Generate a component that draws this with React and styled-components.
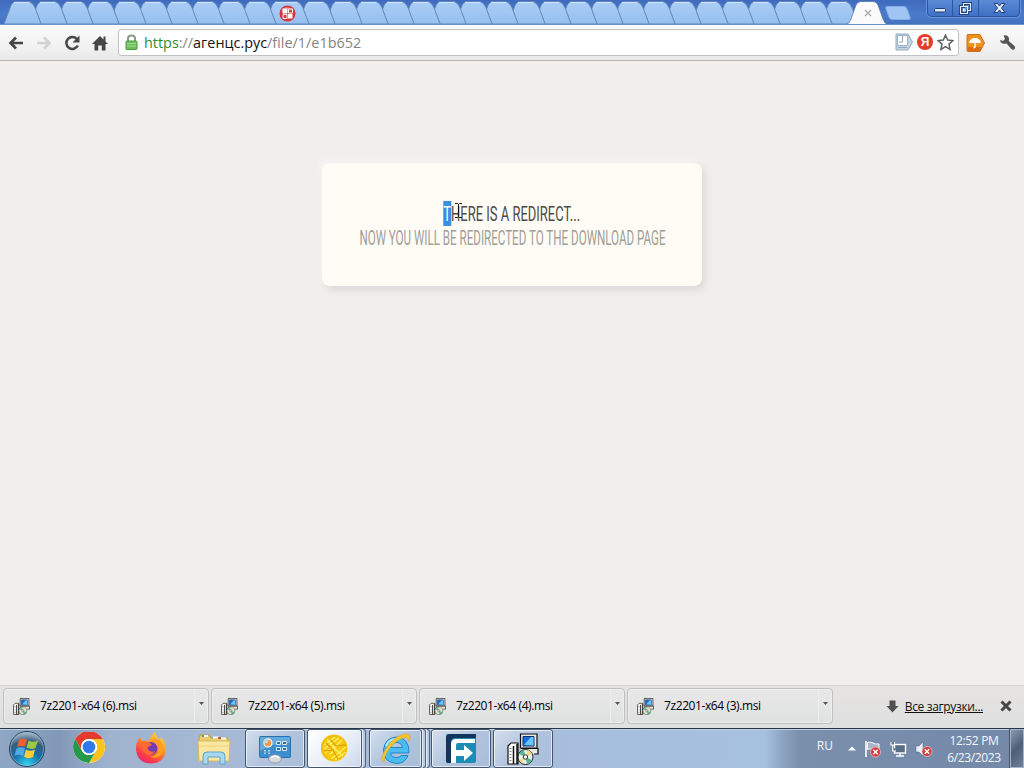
import React from 'react';
import styled, { createGlobalStyle } from 'styled-components';

const GlobalStyle = createGlobalStyle`
    * {
        box-sizing: border-box;
    }
    body {
        margin: 0;
        overflow: hidden;
        font-family: 'Open Sans', 'Noto Sans', sans-serif;
    }
    svg {
        display: block;
        flex: none;
    }
`;

const Screen = styled.div`
    display: flex;
    flex-direction: column;
    width: 1024px;
    height: 768px;
    background-color: #f1eeec;
`;

const TabStrip = styled.div`
    display: flex;
    height: 25px;
    padding-left: 9px;
    overflow: hidden;
    background: linear-gradient(#3f6abf, #4a7bcb 60%, #4472be);
    border-bottom: 1px solid #6f94cc;
`;

const TabCell = styled.div`
    position: relative;
    flex: none;
    width: ${props => props.$width}px;
    z-index: ${props => props.$level};

    svg {
        overflow: visible;
    }
`;

const Favicon = styled.div`
    position: absolute;
    left: 9px;
    top: 5px;
`;

const NewTab = styled.div`
    width: 22px;
    height: 14px;
    margin: 6px 0 0 8px;
    transform: skewX(20deg);
    border: 1px solid #83ade8;
    border-radius: 3px;
    background-color: #a0c4f3;
`;

const WindowButtons = styled.div`
    display: flex;
    height: 17px;
    margin-left: auto;
    margin-right: 4px;
    border: 1px solid #2c55a0;
    border-top: none;
    border-radius: 0 0 5px 5px;
    background: linear-gradient(#5c8ad6, #3f70c4);
    box-shadow: 0 0 0 1px #6692da;
`;

const WindowButton = styled.div`
    display: flex;
    align-items: center;
    justify-content: center;
    width: ${props => props.$width}px;
    padding-top: ${props => props.$drop || 0}px;
    border-right: ${props => props.$last ? 'none' : '1px solid #2c55a0'};
`;

const Toolbar = styled.div`
    display: flex;
    align-items: center;
    height: 36px;
    padding: 0 8px;
    background: linear-gradient(#fbfbfb, #f4f4f4 50%, #e8e8e8);
    border-bottom: 1px solid #b8b8b8;
`;

const NavButtons = styled.div`
    display: flex;
    gap: 12px;
    width: 110px;
`;

const AddressBar = styled.div`
    display: flex;
    align-items: center;
    width: 841px;
    height: 27px;
    margin-top: -1px;
    padding: 0 4px 0 6px;
    border: 1px solid #c2c2c2;
    border-radius: 3px;
    background-color: #fff;
`;

const Url = styled.div`
    flex: 1;
    margin: 1px 0 0 6px;
    color: #858585;
    font-size: 14.4px;
    line-height: 20px;
    white-space: pre;
`;

const Scheme = styled.span`
    color: #2c9030;
`;

const Host = styled.span`
    color: #111;
`;

const BarIcons = styled.div`
    display: flex;
    align-items: center;
    gap: 4px;
`;

const Extensions = styled.div`
    display: flex;
    align-items: center;
    gap: 14px;
    margin-left: 7px;
`;

const Page = styled.main`
    flex: 1;
    padding-top: 102px;
`;

const Card = styled.div`
    display: flex;
    flex-direction: column;
    align-items: center;
    width: 380px;
    height: 123px;
    margin: 0 auto;
    padding-top: 38px;
    border-radius: 8px;
    background-color: #fffcf6;
    box-shadow: 3px 4px 8px rgba(0, 0, 0, 0.09), -3px -3px 7px rgba(255, 255, 255, 0.45);
    font-family: Roboto, 'Open Sans', sans-serif;
    text-transform: uppercase;
    white-space: nowrap;
`;

const Heading = styled.div`
    color: #4d4b49;
    font-size: 21px;
    font-weight: 400;
    line-height: 26px;
    transform: scaleX(${props => props.$squeeze});
`;

const Message = styled.div`
    color: #a09e98;
    font-size: 20.5px;
    font-weight: 400;
    line-height: 24px;
    margin-top: -1px;
    transform: scaleX(${props => props.$squeeze});
`;

const Selected = styled.span`
    display: inline-block;
    height: 25px;
    background-color: #3b8fe0;
    color: #fff;
`;

const HeadingRow = styled.div`
    position: relative;
`;

const Cursor = styled.svg`
    position: absolute;
    left: calc(50% - 58px);
    top: 1px;
`;

const Shelf = styled.div`
    display: flex;
    align-items: center;
    gap: 2px;
    height: 43px;
    padding: 0 12px 2px 3px;
    border-top: 1px solid #d6d4d2;
    background: linear-gradient(#e6e4e3, #dedfdf);
`;

const Download = styled.div`
    display: flex;
    align-items: center;
    width: 206px;
    height: 36px;
    padding-left: 9px;
    border: 1px solid #c0c0c0;
    border-radius: 4px;
    background: linear-gradient(#e9e8e8, #dfe1e1);
    box-shadow: inset 0 0 0 1px #efeeee;
`;

const FileName = styled.div`
    flex: 1;
    margin: -1px 0 0 10px;
    color: #000;
    font-size: 12px;
    letter-spacing: -0.4px;
    white-space: nowrap;
`;

const Arrow = styled.div`
    width: 14px;
    height: 32px;
    padding: 12px 0 0 4px;
    border-left: 1px solid #eeeeee;
`;

const AllDownloads = styled.div`
    display: flex;
    align-items: center;
    gap: 6px;
    margin-left: auto;
    color: #111;
    font-size: 12px;
    letter-spacing: -0.35px;
    white-space: nowrap;

    u {
        margin-right: 11px;
    }
`;

const TaskbarRow = styled.div`
    display: flex;
    height: 40px;
    border-top: 1px solid #26364a;
    box-shadow: inset 0 1px 0 #c3d0e2;
    background: linear-gradient(90deg, #8fa6c5 0, #8298b7 60px, #9fb3cf 110px, #a6bad6 240px, #a6bedb 560px, #a6c0df 765px, #8ca4c3 782px, #7a8fac 800px, #7489a8 1024px);
`;

const Pinned = styled.div`
    display: flex;
    align-items: center;
    gap: 30px;
    width: 236px;
    margin-right: 9px;
    padding-left: 8px;

    svg:nth-child(2) {
        margin-left: -3px;
    }
`;

const TaskButton = styled.div`
    display: flex;
    align-items: center;
    justify-content: center;
    width: ${props => props.$width}px;
    height: 39px;
    margin-right: ${props => props.$gap}px;
    border: 1px solid #45556d;
    border-radius: 3px;
    background: ${props => props.$active
        ? 'linear-gradient(135deg, #ffffff, #e6edf7 60%, #c9d7ea)'
        : 'linear-gradient(135deg, #d5dfed, #b1c3dd 50%, #a9bedb)'};
    box-shadow: inset 0 0 0 1px rgba(255, 255, 255, 0.65);
`;

// edge of the windows grouped behind a task button
const StackEdge = styled.div`
    width: 4px;
    height: 39px;
    margin-right: ${props => props.$gap || 0}px;
    border: 1px solid #53647c;
    border-left: 1px solid #e4ecf6;
    border-radius: 0 3px 3px 0;
    background-color: #b9cae1;
`;

const Tray = styled.div`
    display: flex;
    align-items: center;
    margin-left: auto;
    color: #f3f7fc;
`;

const Language = styled.div`
    margin: -6px 15px 0 0;
    font-size: 12px;
`;

const TrayIcons = styled.div`
    display: flex;
    align-items: center;
    gap: 8px;
    margin-right: 13px;
`;

const Clock = styled.div`
    width: 56px;
    margin-right: 8px;
    font-size: 12px;
    line-height: 17px;
    text-align: center;
    letter-spacing: -0.35px;
    white-space: nowrap;
`;

const ShowDesktop = styled.div`
    width: 14px;
    height: 39px;
    border: 1px solid #a3b4ca;
    background: linear-gradient(135deg, #8a9aae, #4d5f78 50%, #6f8198);
    box-shadow: -1px 0 0 #44546b;
`;

const Tab = ({ width = 26.15, level, children }) => (
    <TabCell $width={width} $level={level}>
        <svg width={width} height="24">
            <path
                d={`M-5 24 L1 8 Q3 1.5 7 1.5 H${width - 7} Q${width - 3} 1.5 ${width} 8 L${width + 6} 24 Z`}
                fill="url(#tabFill)"
                stroke="#6286bb"
            />
            <path d={`M5 2.5 H${width - 6}`} stroke="#cfe2fb" />
        </svg>
        {children}
    </TabCell>
);

const TabDefs = () => (
    <svg width="0" height="0">
        <defs>
            <linearGradient id="tabFill" x1="0" y1="0" x2="0" y2="1">
                <stop offset="0" stopColor="#a9cdf6" />
                <stop offset="1" stopColor="#97c0ee" />
            </linearGradient>
        </defs>
    </svg>
);

const Tabs = () => {
    const tabs = [];
    for (let i = 0; i < 32; i++) {
        tabs.push(
            <Tab key={i} level={40 - i} width={i === 10 ? 33 : 26.15}>
                {i === 10 && (
                    <Favicon>
                        <svg width="17" height="17" viewBox="0 0 17 17">
                            <circle cx="8.500" cy="8.500" r="8" fill="#d8323a" />
                            <path d="M2 6 Q8 -2 15 6 Q8 4 2 6" fill="#ea7378" />
                            <path d="M3.500 3.500 h5 v5 h-5z M9 9 h4.500 v4.500 h-4.500z" fill="#fff" />
                            <path d="M9.500 4 h4 v4 h-4z M4 9.500 h4 v4 h-4z" fill="none" stroke="#fff" />
                        </svg>
                    </Favicon>
                )}
            </Tab>
        );
    }
    return tabs;
};

const ActiveTab = () => (
    <TabCell $width={27} $level={50}>
        <svg width="27" height="25">
            <path d="M-6 25 Q-3 24 -1 19 L4 5 Q5.500 1.500 9 1.500 H21 Q24.500 1.500 26 5 L31 19 Q33 24 36 25 Z" fill="#fbfbfb" stroke="#5378ae" strokeWidth="0.800" />
            <path d="M13 10 l6 6 M19 10 l-6 6" stroke="#a8a8a8" strokeWidth="1.300" />
        </svg>
    </TabCell>
);

const InstallerIcon = ({ size }) => (
    <svg width={size} height={size} viewBox="0 0 32 32">
        <path d="M1 13 L4 10 H11 V31 H1 Z" fill="#fff" stroke="#111" strokeWidth="1.200" />
        <path d="M6.500 13 V31 M10 11 V31" stroke="#111" strokeWidth="1.500" />
        <path d="M3.500 15 V30" stroke="#888" strokeDasharray="1 2" strokeWidth="2" />
        <path d="M13.500 1 H30 V15 H13.500 Z" fill="#e8e8e8" stroke="#111" strokeWidth="1.200" />
        <path d="M16 3.500 H27 V13 H16 Z" fill="#1370e0" stroke="#0c2c64" />
        <path d="M17 12 L24 4 H26.500 V12.500 Z" fill="#6cc5ff" />
        <path d="M14 15.500 H31 V21 H27" fill="#e8e8e8" stroke="#111" strokeWidth="1.200" />
        <circle cx="18.500" cy="24" r="7.500" fill="#e8f2ea" stroke="#222" />
        <path d="M18.500 24 L12 21 A7 7 0 0 1 17 17Z M18.500 24 L25 27 A7 7 0 0 1 20 31Z" fill="#57b590" />
        <path d="M18.500 24 L21 17 A7 7 0 0 1 25 21Z M18.500 24 L15 30 L12 27Z" fill="#ecd98c" />
        <circle cx="18.500" cy="24" r="2.200" fill="#fff" stroke="#333" />
    </svg>
);

const StartIcon = () => (
    <svg width="38" height="38" viewBox="0 0 38 38">
        <defs>
            <radialGradient id="orb" cx="0.5" cy="0.95" r="0.9">
                <stop offset="0" stopColor="#34d5f3" />
                <stop offset="0.450" stopColor="#1670a9" />
                <stop offset="0.750" stopColor="#365d7e" />
                <stop offset="1" stopColor="#9fb3c5" />
            </radialGradient>
        </defs>
        <circle cx="19" cy="19" r="17.500" fill="url(#orb)" stroke="#27435f" />
        <circle cx="19" cy="19" r="16.500" fill="none" stroke="#9bbcd0" strokeOpacity="0.600" />
        <path d="M11 10 Q15 7 19 10 L17 17 Q13 15 9 17 Z" fill="#ed622b" />
        <path d="M20.500 10.500 Q25 13 30 10.500 L27.500 18 Q23 20 18.500 17.500 Z" fill="#9dca3c" />
        <path d="M8.500 18.500 Q13 16 17 18.500 L15 26 Q11 23.500 6.500 26 Z" fill="#4eabe8" />
        <path d="M18 19.500 Q22 22 27 19.500 L25 27 Q20 29.500 16 26.500 Z" fill="#fbcd3b" />
    </svg>
);

const ChromeIcon = () => (
    <svg width="32" height="34" viewBox="0 1 32 34">
        <circle cx="16" cy="16" r="16" fill="#fff" />
        <path d="M2.150 8 A16 16 0 0 1 29.850 8 H16 A8 8 0 0 0 9.070 20 Z" fill="#e33b2e" />
        <path d="M29.850 8 A16 16 0 0 1 16 32 L22.930 20 A8 8 0 0 0 16 8 Z" fill="#fcc31e" />
        <path d="M16 32 A16 16 0 0 1 2.150 8 L9.070 20 A8 8 0 0 0 22.930 20 Z" fill="#25994b" />
        <circle cx="16" cy="16" r="8" fill="#fff" />
        <circle cx="16" cy="16" r="6.300" fill="#3278e6" />
    </svg>
);

const FirefoxIcon = () => (
    <svg width="32" height="34" viewBox="0 0 32 34">
        <defs>
            <linearGradient id="fox" x1="0.8" y1="0" x2="0.2" y2="1">
                <stop offset="0" stopColor="#ffdf3c" />
                <stop offset="0.400" stopColor="#ff9427" />
                <stop offset="0.750" stopColor="#fb3f46" />
                <stop offset="1" stopColor="#e52278" />
            </linearGradient>
        </defs>
        <path d="M1 17 Q1 10 5 5 Q6 8 8 9 Q12 8 14 9 Q16 3 20 0 Q21 5 25 8 Q26 6 26 5 Q31 10 31 17 Q30 31 16 31.500 Q2 31 1 17Z" fill="url(#fox)" />
        <circle cx="16" cy="16.500" r="6.500" fill="#7639b9" />
        <path d="M7 10 Q13 8 17 13 Q13 14 12.500 17 Q15 21 20 19 Q17 25 11 22 Q6 18 7 10Z" fill="#ff6a35" />
        <path d="M17 10 Q23 9 23.500 16 Q23 24 15 25 Q25 28 28 19 Q29 10 22 7 Q17 5 17 10Z" fill="#ff9d25" />
    </svg>
);

const ExplorerIcon = () => (
    <svg width="34" height="32" viewBox="0 0 34 32">
        <path d="M2 5 L3 2 H12 L14 5 H31 V27 H2 Z" fill="#e9cc6c" stroke="#c0a145" />
        <path d="M6 3 h5 M16 4.500 h6 M24 5.500 h5" stroke="#fff" strokeWidth="2" />
        <path d="M5 3 h2" stroke="#4aa650" strokeWidth="2" />
        <path d="M21 5 h3" stroke="#c55636" strokeWidth="2" />
        <path d="M1 8 H33 L32 28 H2 Z" fill="#fae7a0" stroke="#d7ba60" />
        <path d="M2 13 H32" stroke="#efd27b" />
        <path d="M6 31 V23 Q6 19 10 19 H24 Q28 19 28 23 V31 H23 V24 H11 V31 Z" fill="#a8d9f0" stroke="#5ea3cb" />
    </svg>
);

const ControlPanelIcon = () => (
    <svg width="32" height="30" viewBox="0 0 32 30">
        <rect x="0.5" y="2.5" width="31" height="21" rx="1" fill="#3d8ecf" stroke="#2970b0" />
        <path d="M1 3 H31 V9 Q16 8 1 17Z" fill="#62aadc" />
        <circle cx="9" cy="9" r="4" fill="#f29b46" stroke="#e4f1fa" strokeWidth="1.300" />
        <path d="M9 9 V4 A5 5 0 0 0 4 9Z" fill="#b6dbf2" />
        <path d="M17.500 7.500 h4 v3 h-4z M23.500 7.500 h4 v3 h-4z M17.500 13.500 h4 v3 h-4z M23.500 13.500 h4 v3 h-4z" fill="#2870b2" stroke="#d4eafa" />
        <path d="M6 16 v4 M10 16 v4" stroke="#a8d4f0" strokeDasharray="1.5 1" strokeWidth="2" />
        <ellipse cx="16" cy="25" rx="6.500" ry="4" fill="#d5d9dc" stroke="#949da5" />
        <path d="M12 24 Q16 20 20 24" stroke="#fff" fill="none" strokeWidth="1.500" />
    </svg>
);

const CoinIcon = () => (
    <svg width="28" height="30" viewBox="0 0 28 30">
        <circle cx="13" cy="14" r="13.500" fill="#f9c80f" />
        <circle cx="13" cy="14" r="12" fill="none" stroke="#e6ae0a" strokeDasharray="4 1" />
        <path d="M3 11 L14 3 M3 15 L18 4 M4 19 L13 12 M14 26 L25 18 M10 25 L25 13 M9 20 L15 15 M6 5 L13 14 L22 22 M13 14 L21 6" fill="none" stroke="#fff16a" strokeWidth="1.200" />
        <path d="M5 9 L11 15 M9 5 L15 12 L24 11 M3 17 L12 16 L17 25" fill="none" stroke="#d79c00" strokeWidth="1.100" />
    </svg>
);

const ExplorerEIcon = () => (
    <svg width="32" height="32" viewBox="0 0 32 32">
        <path d="M29 20 H10.500 Q11.500 24.500 16.500 24.500 Q19.500 24.500 21.500 22.500 H28 Q25 30.500 16.500 30.500 Q3.500 29.500 3.500 17 Q4.500 5 16.500 4 Q29.500 5 29 20 Z M10.500 14.500 H22.500 Q21.500 9.500 16.500 9.500 Q11.500 9.500 10.500 14.500Z" fill="#4bbcf0" fillRule="evenodd" stroke="#2186c7" />
        <path d="M6 13 Q9 6 16 6" fill="none" stroke="#b4eaff" strokeWidth="2" />
        <path d="M5 29 Q-1 29 4 19 Q11 5 24 1 Q33 0 29 9 Q29 3 23 5 Q14 8 7 19 Q3 27 5 29Z" fill="#f5c52b" stroke="#d9a216" strokeWidth="0.500" />
    </svg>
);

const ForwardAppIcon = () => (
    <svg width="32" height="32" viewBox="0 0 32 32">
        <rect x="1" y="1" width="30" height="29" rx="2" fill="#1b8cb3" />
        <path d="M1 28 V5 Q1 1 5 1 H31 V5 H10 Q6 5 6 10 V30 H3 Q1 30 1 28 Z" fill="#12355d" />
        <path d="M6 30 V11 Q6 6 11 6 H30 V10 H13 Q11 10 11 12 V17 H19 V12 L28 20 L19 28 V23 H11 V30 Z" fill="#fff" />
    </svg>
);

const RedCross = ({ x, y }) => (
    <g transform={`translate(${x} ${y})`}>
        <circle r="5" fill="#d23b3b" stroke="#f4c8c8" strokeWidth="0.700" />
        <path d="M-2.200 -2.200 L2.200 2.200 M2.200 -2.200 L-2.200 2.200" stroke="#fff" strokeWidth="1.500" />
    </g>
);

const files = ['7z2201-x64 (6).msi', '7z2201-x64 (5).msi', '7z2201-x64 (4).msi', '7z2201-x64 (3).msi'];

const TitleBar = () => (
    <TabStrip>
        <TabDefs />
        <Tabs />
        <ActiveTab />
        <NewTab />
        <WindowButtons>
            <WindowButton $width={25} $drop={4}>
                <svg width="12" height="5"><rect x="0.5" y="0.5" width="11" height="3.500" rx="1" fill="#dfe8f6" stroke="#1f3e78" /></svg>
            </WindowButton>
            <WindowButton $width={26}>
                <svg width="13" height="13">
                    <path d="M4.500 1.500 H11.500 V8.500 H8.500 V11.500 H1.500 V4.500 H4.500 Z" fill="none" stroke="#1f3e78" strokeWidth="3" />
                    <path d="M4.500 4 V1.500 H11.500 V8.500 H9 M1.500 4.500 H8.500 V11.500 H1.500 Z M4.500 7 h1.500 v2 h-1.500z" fill="none" stroke="#e7effb" strokeWidth="1.200" />
                </svg>
            </WindowButton>
            <WindowButton $width={40} $last>
                <svg width="13" height="12">
                    <path d="M1 1.500 H4.500 L6.500 4 L8.500 1.500 H12 L8.500 6 L12 10.500 H8.500 L6.500 8 L4.500 10.500 H1 L4.500 6 Z" fill="#dfe8f6" stroke="#1f3e78" />
                </svg>
            </WindowButton>
        </WindowButtons>
    </TabStrip>
);

const BrowserBar = () => (
    <Toolbar>
        <NavButtons>
            <svg width="16" height="16" viewBox="0 0 16 16">
                <path d="M15 8 H3 M8 2.500 L2.500 8 L8 13.500" fill="none" stroke="#474747" strokeWidth="2.700" />
            </svg>
            <svg width="16" height="16" viewBox="0 0 16 16">
                <path d="M1 8 H13 M8 2.500 L13.500 8 L8 13.500" fill="none" stroke="#d2d2d2" strokeWidth="2.700" />
            </svg>
            <svg width="16" height="16" viewBox="-0.5 0 16 16">
                <path d="M12.600 4.200 A6 6 0 1 0 13.300 10.500" fill="none" stroke="#474747" strokeWidth="2.500" />
                <path d="M15 0.500 V7.500 H8 Z" fill="#474747" />
            </svg>
            <svg width="16" height="16" viewBox="0 0 16 16">
                <path d="M8 1 L11.500 4.500 V1.500 H13.500 V6.500 L16 9 H13.500 V15.500 H9.800 V10.500 H6.200 V15.500 H2.500 V9 H0 Z" fill="#474747" />
            </svg>
        </NavButtons>
        <AddressBar>
            <svg width="13" height="16" viewBox="0 0 13 16">
                <path d="M3 8 V4.500 Q3 1.500 6.500 1.500 Q10 1.500 10 4.500 V8" fill="none" stroke="#8c9a8b" strokeWidth="2" />
                <rect x="1" y="7" width="11" height="8.500" rx="1" fill="#6fc05c" stroke="#499c3b" />
                <path d="M2 9.500 H11 M2 12 H11" stroke="#9fdb8c" />
            </svg>
            <Url><Scheme>https</Scheme>://<Host>агенцс.рус</Host>/file/1/e1b652</Url>
            <BarIcons>
                <svg width="18" height="18" viewBox="0 0 18 18">
                    <path d="M1 1 H13 L17.500 9 L13 17 H1 Z" fill="#c3d2e2" stroke="#9aacbf" />
                    <path d="M2.500 2.500 H12.500 V12.500 H2.500 Z" fill="#fff" stroke="#9db3cb" />
                    <path d="M7.500 3 V9 H4 M3 14.500 H12" fill="none" stroke="#8ea7c2" />
                </svg>
                <svg width="16" height="16" viewBox="0 0 16 16">
                    <circle cx="8" cy="8" r="8" fill="#e83a2b" />
                    <text x="8" y="12.300" textAnchor="middle" fontFamily="Liberation Sans, sans-serif" fontSize="12" fontWeight="700" fill="#fff">Я</text>
                </svg>
                <svg width="17" height="17" viewBox="0 0 17 17">
                    <path d="M8.500 1.200 L10.700 6 L15.900 6.600 L12 10.100 L13.100 15.400 L8.500 12.700 L3.900 15.400 L5 10.100 L1.100 6.600 L6.300 6 Z" fill="#fff" stroke="#5c6166" strokeWidth="1.500" />
                </svg>
            </BarIcons>
        </AddressBar>
        <Extensions>
            <svg width="19" height="18" viewBox="0 0 19 18">
                <path d="M1 1.500 Q1 0.500 2 0.500 H14 L18.500 9 L14 17.500 H2 Q1 17.500 1 16.500Z" fill="#ee921f" stroke="#cd701b" />
                <path d="M1.500 13 H16 L14 17 H2Z" fill="#d96c18" />
                <path d="M3 9 Q4 4 9 4 Q14 4 15 9 Z" fill="#fff" />
                <path d="M9 8 V13 Q9 14 7.500 13.500" fill="none" stroke="#fff" strokeWidth="1.400" />
            </svg>
            <svg width="17" height="17" viewBox="0 0 17 17">
                <path d="M1 6 L4 7 L6 5 L4.500 1.500 Q8 0.500 9.500 3 Q10.500 5 9.800 7 L15.500 12 Q17 14 15 15.500 Q13.500 16.500 12 14.500 L7.500 9.500 Q2 11 1 6Z" fill="#555" />
            </svg>
        </Extensions>
    </Toolbar>
);

const RedirectCard = () => (
    <Card>
        <HeadingRow>
            <Heading $squeeze={0.618}><Selected>T</Selected>here is a redirect...</Heading>
            <Cursor width="9" height="17" viewBox="0 0 9 17">
                <path d="M1 1.500 H3.500 L4.500 2.500 L5.500 1.500 H8 M4.500 2.500 V14.500 M1 15.500 H3.500 L4.500 14.500 L5.500 15.500 H8" fill="none" stroke="#111" />
            </Cursor>
        </HeadingRow>
        <Message $squeeze={0.566}>Now you will be redirected to the download page</Message>
    </Card>
);

const DownloadShelf = () => (
    <Shelf>
        {files.map(name => (
            <Download key={name}>
                <InstallerIcon size={17} />
                <FileName>{name}</FileName>
                <Arrow>
                    <svg width="5" height="3"><path d="M0 0 H5 L2.500 3 Z" fill="#555" /></svg>
                </Arrow>
            </Download>
        ))}
        <AllDownloads>
            <svg width="13" height="13" viewBox="0 0 13 13">
                <path d="M3.500 0.500 H9.500 V6 H12.500 L6.500 12.500 L0.500 6 H3.500 Z" fill="#505050" />
            </svg>
            <u>Все загрузки...</u>
            <svg width="12" height="12" viewBox="0 0 12 12">
                <path d="M1.500 1.500 L10.500 10.500 M10.500 1.500 L1.500 10.500" stroke="#444" strokeWidth="3" />
            </svg>
        </AllDownloads>
    </Shelf>
);

const Taskbar = () => (
    <TaskbarRow>
        <Pinned>
            <StartIcon />
            <ChromeIcon />
            <FirefoxIcon />
            <ExplorerIcon />
        </Pinned>
        <TaskButton $width={60} $gap={2}><ControlPanelIcon /></TaskButton>
        <TaskButton $width={55} $gap={0} $active><CoinIcon /></TaskButton>
        <StackEdge $gap={3} />
        <TaskButton $width={53} $gap={0}><ExplorerEIcon /></TaskButton>
        <StackEdge />
        <StackEdge $gap={1} />
        <TaskButton $width={60} $gap={2}><ForwardAppIcon /></TaskButton>
        <TaskButton $width={60} $gap={0}><InstallerIcon size={32} /></TaskButton>
        <Tray>
            <Language>RU</Language>
            <TrayIcons>
                <svg width="8" height="5"><path d="M0 4.500 L4 0.500 L8 4.500 Z" fill="#fff" /></svg>
                <svg width="18" height="18" viewBox="0 0 18 18">
                    <path d="M2 1 V17" stroke="#fff" strokeWidth="1.600" />
                    <path d="M3.500 2.500 Q7 1.500 9 3 T15 4 V10 Q12 11 9 9.500 T3.500 9.500Z" fill="#a7b6ca" stroke="#fff" />
                    <RedCross x={11.5} y={12} />
                </svg>
                <svg width="17" height="16" viewBox="0 0 17 16">
                    <rect x="4.500" y="3.500" width="11" height="8.500" fill="#596c88" stroke="#fff" strokeWidth="1.400" />
                    <path d="M6 15 H14 M10 12 V15" stroke="#fff" strokeWidth="1.400" />
                    <path d="M1 1 V4 H4.500 V1 M2.750 4 V10 H6" fill="#596c88" stroke="#fff" strokeWidth="1.200" />
                </svg>
                <svg width="18" height="18" viewBox="0 0 18 18">
                    <path d="M1 6 H4 L8 2 V16 L4 12 H1 Z" fill="#e9eff7" stroke="#53647c" strokeWidth="0.500" />
                    <RedCross x={12} y={11.5} />
                </svg>
            </TrayIcons>
            <Clock>
                <div>12:52 PM</div>
                <div>6/23/2023</div>
            </Clock>
            <ShowDesktop />
        </Tray>
    </TaskbarRow>
);

const App = () => (
    <>
        <GlobalStyle />
        <Screen>
            <TitleBar />
            <BrowserBar />
            <Page>
                <RedirectCard />
            </Page>
            <DownloadShelf />
            <Taskbar />
        </Screen>
    </>
);

export default App;
